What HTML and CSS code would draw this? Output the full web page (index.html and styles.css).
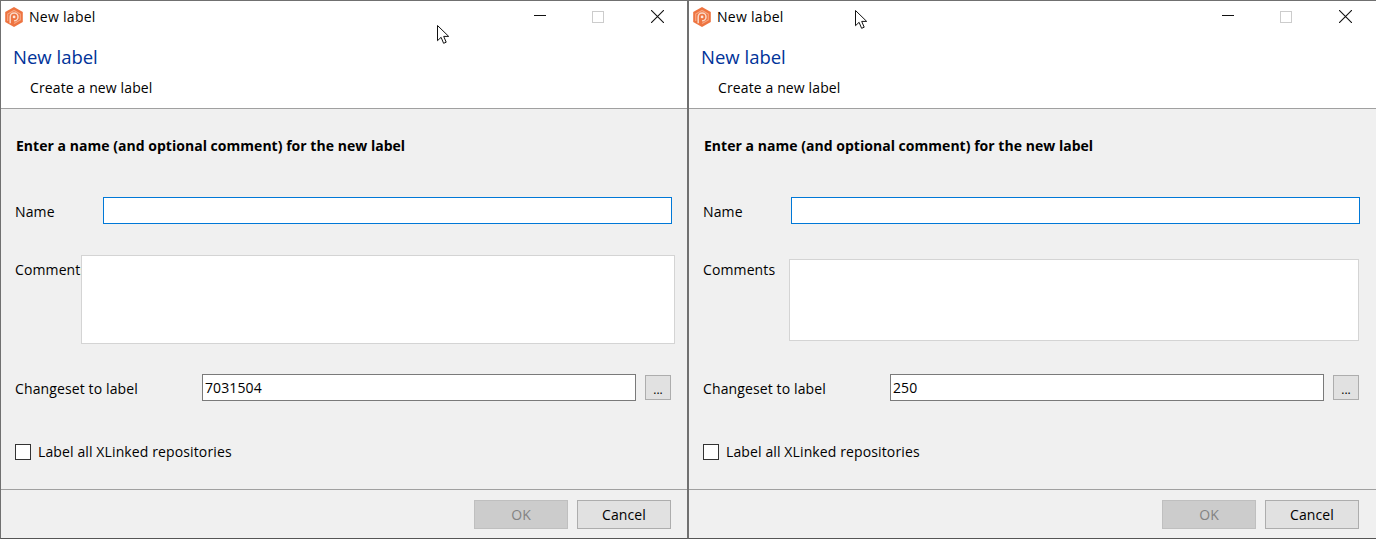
FILE: index.html
```html
<!DOCTYPE html>
<html lang="en">
<head>
<meta charset="utf-8">
<title>New label</title>
<link rel="stylesheet" href="styles.css">
</head>
<body>
<svg class="defs" width="0" height="0" aria-hidden="true">
  <symbol id="logo" viewBox="0 0 20 20">
    <path d="M10 0 18.8 5v10L10 20 1.2 15V5z" fill="#ee7440"/>
    <path d="M6.2 16.2V9.9a3.9 3.9 0 1 1 3.9 3.9" fill="none" stroke="#fbd9c8" stroke-width="1.5"/>
    <path d="M3.7 14V7l6.3-3.6L16.3 7v6L10 16.6" fill="none" stroke="#f7a580" stroke-width="1.2"/>
    <circle cx="10.1" cy="9.9" r="1.4" fill="#fde8dd"/>
  </symbol>
  <symbol id="cursor" viewBox="0 0 13 20">
    <path d="M.5.5v15.2l3.6-3.4 2.5 6 2.6-1.1-2.5-5.8h5z" fill="#fff" stroke="#111" stroke-width="1"/>
  </symbol>
</svg>

<main class="desktop">
  <section class="window window-a">
    <header class="head">
      <div class="titlebar">
        <svg class="logo"><use href="#logo"/></svg>
        <span class="title">New label</span>
        <div class="controls">
          <span class="ctl-min"></span>
          <span class="ctl-max"></span>
          <svg class="ctl-close" viewBox="0 0 12 12"><path d="M0 0 12 12M12 0 0 12" stroke="#111" stroke-width="1"/></svg>
        </div>
      </div>
      <h1 class="heading">New label</h1>
      <p class="sub">Create a new label</p>
    </header>
    <form class="body">
      <h2 class="prompt">Enter a name (and optional comment) for the new label</h2>
      <div class="row row-name">
        <label class="lbl lbl-name">Name</label>
        <input class="field field-focus" type="text">
      </div>
      <div class="row row-comment">
        <label class="lbl lbl-clip">Comments</label>
        <textarea class="area"></textarea>
      </div>
      <div class="row row-set">
        <label class="lbl lbl-set">Changeset to label</label>
        <input class="field" type="text" value="7031504">
        <button class="dots" type="button">...</button>
      </div>
      <label class="check"><span class="box"></span>Label all XLinked repositories</label>
    </form>
    <footer class="foot">
      <button class="btn btn-off" type="button" disabled>OK</button>
      <button class="btn" type="button">Cancel</button>
    </footer>
    <svg class="cursor cursor-a"><use href="#cursor"/></svg>
  </section>

  <section class="window window-b">
    <header class="head">
      <div class="titlebar">
        <svg class="logo"><use href="#logo"/></svg>
        <span class="title">New label</span>
        <div class="controls">
          <span class="ctl-min"></span>
          <span class="ctl-max"></span>
          <svg class="ctl-close" viewBox="0 0 12 12"><path d="M0 0 12 12M12 0 0 12" stroke="#111" stroke-width="1"/></svg>
        </div>
      </div>
      <h1 class="heading">New label</h1>
      <p class="sub">Create a new label</p>
    </header>
    <form class="body">
      <h2 class="prompt">Enter a name (and optional comment) for the new label</h2>
      <div class="row row-name">
        <label class="lbl lbl-name">Name</label>
        <input class="field field-focus" type="text">
      </div>
      <div class="row row-comment">
        <label class="lbl lbl-comment">Comments</label>
        <textarea class="area"></textarea>
      </div>
      <div class="row row-set">
        <label class="lbl lbl-set">Changeset to label</label>
        <input class="field" type="text" value="250">
        <button class="dots" type="button">...</button>
      </div>
      <label class="check"><span class="box"></span>Label all XLinked repositories</label>
    </form>
    <footer class="foot">
      <button class="btn btn-off" type="button" disabled>OK</button>
      <button class="btn" type="button">Cancel</button>
    </footer>
    <svg class="cursor cursor-b"><use href="#cursor"/></svg>
  </section>
</main>
</body>
</html>
```
FILE: styles.css
```css
* { box-sizing: border-box; }
html, body { margin: 0; padding: 0; background: #fff; overflow: hidden; }
body { font: 14px/19px "Open Sans", "Noto Sans", sans-serif; color: #000; letter-spacing: .12px; }
.defs { position: absolute; }
.desktop { display: flex; width: 1376px; height: 539px; }

.window {
  position: relative;
  display: flex;
  flex-direction: column;
  width: 688px;
  height: 539px;
  background: #f0f0f0;
  border-top: 1px solid #707070;
  border-bottom: 1px solid #555;
  border-left: 1px solid #707070;
}
.window-a { border-right: 1px solid #707070; }

.head { height: 108px; flex: none; background: #fff; border-bottom: 1px solid #a0a0a0; }
.titlebar { display: flex; align-items: center; height: 31px; padding-left: 3px; }
.logo { width: 20px; height: 20px; flex: none; }
.title { margin-left: 5px; letter-spacing: .28px; }
.controls { display: flex; align-items: center; margin-left: auto; height: 31px; }
.ctl-min { display: block; width: 12px; height: 1px; background: #111; margin-right: 46px; position: relative; top: -1px; }
.ctl-max { display: block; width: 12px; height: 12px; border: 1px solid #ccc; margin-right: 47px; }
.ctl-close { display: block; width: 13px; height: 13px; margin-right: 23px; }
.window-b .ctl-close { margin-right: 24px; }

.heading { margin: 14px 0 0 12px; font-size: 18.5px; line-height: 22px; font-weight: 400; color: #003399; letter-spacing: 0; }
.sub { margin: 10px 0 0 29px; }

.body { flex: 1; padding: 27px 0 0 14px; position: relative; }
.prompt { margin: 0 0 0 1px; font-size: 14px; line-height: 19px; font-weight: 700; letter-spacing: .03px; }

.row { display: flex; align-items: flex-start; }
.row-name { margin-top: 42px; height: 27px; }
.row-comment { margin-top: 31px; height: 89px; }
.row-set { margin-top: 30px; height: 27px; }
.window-b .row-comment { padding-top: 4px; }

.lbl { flex: none; line-height: 27px; padding-top: 1px; }
.lbl-name { width: 88px; }
.lbl-clip { width: 66px; height: 28px; overflow: hidden; white-space: nowrap; }
.lbl-comment { width: 86px; margin-top: -4px; }
.lbl-set { width: 187px; }

.field {
  width: 569px;
  height: 27px;
  padding: 0 2px;
  background: #fff;
  border: 1px solid #7a7a7a;
  border-radius: 0;
  outline: 0;
  font: inherit;
  letter-spacing: inherit;
  color: #000;
}
.row-set .field { width: 434px; }
.row-name .field-focus { border-color: #0078d7; }

.area {
  display: block;
  width: 594px;
  height: 89px;
  padding: 0;
  background: #fff;
  border: 1px solid #d4d4d4;
  border-radius: 0;
  outline: 0;
  resize: none;
}
.window-b .area { width: 570px; height: 82px; }

.dots {
  width: 26px;
  height: 25px;
  margin: 1px 0 0 9px;
  padding: 4px 0 0;
  background: #e1e1e1;
  border: 1px solid #adadad;
  font: 12px/12px "Open Sans", sans-serif;
  letter-spacing: 0;
  color: #000;
}

.check { display: flex; align-items: center; margin-top: 41px; height: 19px; }
.box { width: 16px; height: 16px; margin-right: 7px; background: #fff; border: 1px solid #333; }

.foot { display: flex; justify-content: flex-end; gap: 9px; height: 49px; flex: none; padding: 10px 16px 0 0; border-top: 1px solid #a0a0a0; }
.window-b .foot { padding-right: 17px; }
.btn {
  width: 94px;
  height: 29px;
  padding: 0;
  background: #e1e1e1;
  border: 1px solid #adadad;
  border-radius: 0;
  font: inherit;
  letter-spacing: inherit;
  color: #000;
}
.btn-off { background: #ccc; border-color: #bfbfbf; color: #838383; }

.cursor { position: absolute; width: 13px; height: 20px; }
.cursor-a { left: 436px; top: 24px; }
.cursor-b { left: 166px; top: 9px; }
```
